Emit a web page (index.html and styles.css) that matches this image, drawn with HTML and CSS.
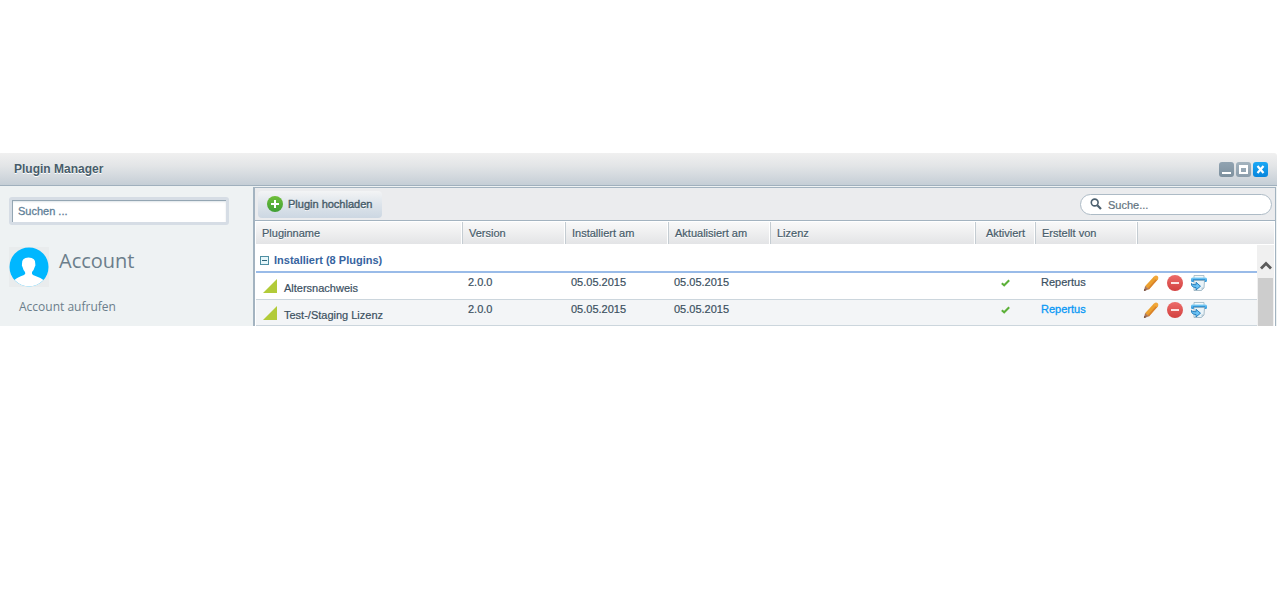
FILE: index.html
```html
<!DOCTYPE html>
<html lang="de">
<head>
<meta charset="utf-8">
<title>Plugin Manager</title>
<link rel="stylesheet" href="styles.css">
</head>
<body>
<svg class="defs" aria-hidden="true">
  <defs>
    <linearGradient id="gGreen" x1="0" y1="0" x2="0" y2="1"><stop offset="0" stop-color="#6fbe3a"/><stop offset="1" stop-color="#3f9f34"/></linearGradient>
    <linearGradient id="gRed" x1="0" y1="0" x2="0" y2="1"><stop offset="0" stop-color="#ec6c6a"/><stop offset="1" stop-color="#d2403f"/></linearGradient>
    <linearGradient id="gBlue" x1="0" y1="0" x2="0" y2="1"><stop offset="0" stop-color="#7fd0f8"/><stop offset="1" stop-color="#2490da"/></linearGradient>
    <symbol id="pencil" viewBox="0 0 16 16">
      <path d="M11 1.500 14.500 4.200 6 14.300 2 11.200Z" fill="#eba02f"/>
      <path d="M13.400 3.400 14.800 4.400 6 14.500 4.600 13.400Z" fill="#d9822b"/>
      <path d="M10.500 2.200Q12-.3 14 .7T15 4.200L14 5.200 10 2.400Z" fill="#f2a73a"/>
      <path d="M2.100 11 6 14.200 1 16Z" fill="#a8755a"/>
      <path d="M1.500 13.800 3.300 15.200 .8 16Z" fill="#6b4636"/>
    </symbol>
    <symbol id="minus" viewBox="0 0 16 16">
      <circle cx="8" cy="8" r="8" fill="url(#gRed)"/><rect x="4" y="7" width="8" height="2" fill="#fbe4e3"/>
    </symbol>
    <symbol id="printer" viewBox="0 0 16 16">
      <path d="M3 .5h10v3H3z" fill="#f4f8fa" stroke="#9bb4c2" stroke-width=".8"/>
      <rect x="0" y="2.500" width="16" height="4.500" rx="1.500" fill="url(#gBlue)"/>
      <path d="M2 5h12" stroke="#1774bb" stroke-width="1"/>
      <path d="M3 5.500h10.500L13 13l-2.500 2.500H3z" fill="#e9f3f8" stroke="#93adbc" stroke-width=".8"/>
      <path d="M13 12.500h-2.500v3z" fill="#b5cad6"/>
      <path d="M.5 8.300Q1 10 5 9.800V7.300L9.500 11.200 5 15v-2.500Q0 12.500.5 8.300Z" fill="#6cc3f5" stroke="#1976b8" stroke-width=".9"/>
    </symbol>
    <symbol id="tick" viewBox="0 0 9 8"><path d="M.8 4.200 3.200 6.300 8.200 1.300" fill="none" stroke="#5cb038" stroke-width="2"/></symbol>
    <symbol id="corner" viewBox="0 0 14 14"><path d="M14 0V14H0Z" fill="#b2cb39"/></symbol>
  </defs>
</svg>
<main class="window">
  <header class="titlebar">
    <h1 class="title">Plugin Manager</h1>
    <div class="tools">
      <button class="tool" aria-label="Minimieren"><svg viewBox="0 0 15 15"><path d="M3 11h9" stroke="#fff" stroke-width="2"/></svg></button>
      <button class="tool" aria-label="Maximieren"><svg viewBox="0 0 15 15"><path d="M3 4.500h9" stroke="#fff" stroke-width="3"/><path d="M4 4v7h7V4" fill="none" stroke="#fff" stroke-width="2"/></svg></button>
      <button class="tool tool-close" aria-label="Schließen"><svg viewBox="0 0 15 15"><path d="M4.500 4 10.500 11M10.500 4 4.500 11" stroke="#fff" stroke-width="2.200"/></svg></button>
    </div>
  </header>
  <div class="content">
    <aside class="sidebar">
      <input class="side-search" type="text" placeholder="Suchen ..." aria-label="Suchen">
      <div class="account">
        <svg class="avatar" viewBox="0 0 40 40" aria-hidden="true">
          <rect width="40" height="40" fill="#e9eced"/>
          <circle cx="20" cy="20" r="19.500" fill="#00b7ff"/>
          <path d="M5.500 33Q8 30.500 15 28Q17 27 16 25Q14 22.500 13.500 20Q12.500 18.500 13 17Q12.500 10.500 19.500 10.500Q26.800 10.500 26.300 17Q26.800 18.500 25.700 20Q25 23 23 25Q22.500 27 24 28Q31 30.500 34.500 33Q28 39.500 20 39.500T5.500 33Z" fill="#fff"/>
        </svg>
        <h2 class="account-title">Account</h2>
      </div>
      <a class="account-link" href="#">Account aufrufen</a>
    </aside>
    <section class="panel">
      <div class="toolbar">
        <button class="upload">
          <svg class="plus" viewBox="0 0 16 16" aria-hidden="true"><circle cx="8" cy="8" r="8" fill="url(#gGreen)"/><path d="M8 4v8M4 8h8" stroke="#fff" stroke-width="2"/></svg>
          Plugin hochladen
        </button>
        <label class="filter">
          <svg class="lens" viewBox="0 0 12 12" aria-hidden="true"><circle cx="4.700" cy="4.500" r="3.400" fill="none" stroke="#4c606f" stroke-width="1.600"/><path d="M7.300 7.200 11 11" stroke="#4c606f" stroke-width="2.200"/></svg>
          <input class="filter-input" type="text" placeholder="Suche..." aria-label="Suche">
        </label>
      </div>
      <div class="grid">
        <table class="plugins">
          <colgroup><col class="c-name"><col class="c-date"><col class="c-date"><col class="c-update"><col class="c-license"><col class="c-active"><col class="c-author"><col></colgroup>
          <thead>
            <tr><th>Pluginname</th><th>Version</th><th>Installiert am</th><th>Aktualisiert am</th><th>Lizenz</th><th class="active">Aktiviert</th><th>Erstellt von</th><th></th></tr>
          </thead>
          <tbody>
            <tr class="group"><td colspan="8"><div class="group-label"><svg class="toggle" viewBox="0 0 9 9" aria-hidden="true"><rect x=".5" y=".5" width="8" height="8" fill="#e6f6fa" stroke="#4f8fa3"/><path d="M2 4.500h5" stroke="#2d6478"/></svg>Installiert (8 Plugins)</div></td></tr>
            <tr class="row">
              <td><div class="name"><svg class="corner" aria-hidden="true"><use href="#corner"/></svg>Altersnachweis</div></td>
              <td>2.0.0</td><td>05.05.2015</td><td>05.05.2015</td><td></td>
              <td class="active"><svg class="tick" aria-label="Aktiviert"><use href="#tick"/></svg></td>
              <td>Repertus</td>
              <td><div class="actions"><button class="action" aria-label="Bearbeiten"><svg><use href="#pencil"/></svg></button><button class="action" aria-label="Deinstallieren"><svg><use href="#minus"/></svg></button><button class="action" aria-label="Neu installieren"><svg><use href="#printer"/></svg></button></div></td>
            </tr>
            <tr class="row alt">
              <td><div class="name"><svg class="corner" aria-hidden="true"><use href="#corner"/></svg>Test-/Staging Lizenz</div></td>
              <td>2.0.0</td><td>05.05.2015</td><td>05.05.2015</td><td></td>
              <td class="active"><svg class="tick" aria-label="Aktiviert"><use href="#tick"/></svg></td>
              <td><a class="author" href="#">Repertus</a></td>
              <td><div class="actions"><button class="action" aria-label="Bearbeiten"><svg><use href="#pencil"/></svg></button><button class="action" aria-label="Deinstallieren"><svg><use href="#minus"/></svg></button><button class="action" aria-label="Neu installieren"><svg><use href="#printer"/></svg></button></div></td>
            </tr>
          </tbody>
        </table>
        <div class="scrollbar" aria-hidden="true">
          <svg class="scroll-up" viewBox="0 0 12 9"><path d="M1 7.500 6 2.500 11 7.500" fill="none" stroke="#5b5b5b" stroke-width="2.800"/></svg>
          <div class="thumb"></div>
        </div>
      </div>
    </section>
  </div>
</main>
</body>
</html>
```
FILE: styles.css
```css
* { box-sizing: border-box; }
body {
  margin: 0;
  padding-top: 153px;
  background: #fff;
  color: #475c6a;
  font: 11px/13px "Liberation Sans", Arial, sans-serif;
}
button, input { font: inherit; color: inherit; }
button { border: 0; padding: 0; background: none; }
svg { display: block; }
.defs { position: absolute; width: 0; height: 0; }

.titlebar {
  display: flex;
  align-items: center;
  justify-content: space-between;
  height: 33px;
  padding: 0 9px 0 14px;
  background: linear-gradient(#f0f0f0, #e3e5e7 40%, #c5ced6);
  border-bottom: 1px solid #a0b0bd;
  border-top-right-radius: 3px;
}
.title { margin: 0; font-size: 12px; line-height: 16px; text-shadow: 0 1px 0 #fff; }
.tools { display: flex; gap: 2px; }
.tool { width: 15px; height: 15px; border-radius: 3px; background: linear-gradient(#91a3b1, #7d909e); }
.tool:nth-child(2) { background: linear-gradient(#a4b3be, #8b9dab); }
.tool-close { background: linear-gradient(#1ba8f5, #0785dc); }

.content { display: flex; background: #eef2f3; }
.sidebar { width: 253px; padding: 11px 9px 0; flex: none; }
.side-search {
  display: block;
  width: 220px;
  height: 28px;
  padding: 0 6px;
  border: 3px solid #d6dde5;
  border-radius: 3px;
  background: #fff;
  box-shadow: inset 1px 1px 0 #94a6b3, inset 0 2px 2px #dfe5e9;
}
.side-search::placeholder { color: #5f7f98; opacity: 1; -webkit-text-stroke: 0.300px #5f7f98; }
.account { display: flex; gap: 10px; padding-top: 22px; font-family: "Open Sans", sans-serif; }
.avatar { width: 40px; height: 40px; }
.account-title { margin: 0; color: #6b7e8b; font-size: 20px; line-height: 28px; font-weight: 400; }
.account-link {
  display: block;
  margin: 11px 0 0 10px;
  color: #6b7e8b;
  font: 12px/18px "Open Sans", sans-serif;
  text-decoration: none;
}

.panel {
  flex: 1;
  min-width: 0;
  margin: 1px 1px 0 0;
  border: solid #a3b3c0;
  border-width: 1px 1px 0 2px;
  background: #fff;
}
.toolbar {
  display: flex;
  align-items: center;
  justify-content: space-between;
  height: 33px;
  padding: 0 3px;
  background: #ebecee;
  border-bottom: 1px solid #a3b3c0;
}
.upload {
  display: flex;
  align-items: center;
  gap: 5px;
  height: 27px;
  padding: 0 10px 0 9px;
  border-radius: 4px;
  background: linear-gradient(#f3f4f5, #dde4eb 50%, #ccd7e2);
  text-shadow: 0 1px 0 #fff;
  -webkit-text-stroke: 0.400px #475c6a;
}
.plus { width: 16px; height: 16px; }
.filter {
  display: flex;
  align-items: center;
  gap: 6px;
  width: 192px;
  height: 21px;
  padding: 0 9px;
  border: 1px solid #adbbc6;
  border-radius: 11px;
  background: #fff;
}
.lens { width: 12px; height: 12px; flex: none; }
.filter-input { flex: 1; min-width: 0; padding: 2px 0 0; border: 0; background: none; outline: 0; }
.filter-input::placeholder { color: #62727e; opacity: 1; -webkit-text-stroke: 0.200px #62727e; }

.grid { position: relative; margin: 1px 1px 0; }
.plugins { width: 100%; table-layout: fixed; border-collapse: separate; border-spacing: 0; }
.c-name { width: 207px; }
.c-date { width: 103px; }
.c-update { width: 102px; }
.c-license { width: 205px; }
.c-active { width: 60px; }
.c-author { width: 102px; }
th {
  height: 22px;
  padding: 0 6px;
  background: linear-gradient(#f9f9f9, #e3e4e6);
  border-right: 1px solid #c4ccd2;
  box-shadow: inset -1px 0 0 #fff;
  font-weight: 400;
  text-align: left;
  white-space: nowrap;
  text-shadow: 0 1px 0 #fff;
  -webkit-text-stroke: 0.200px #475c6a;
}
th:last-child { border-right: 0; box-shadow: none; }
td { padding: 0; }
.group td { height: 29px; padding: 5px 4px 0; border-bottom: 2px solid #99bbe8; }
.group-label { display: flex; align-items: center; gap: 5px; color: #3764a0; font-weight: 700; }
.toggle { width: 9px; height: 9px; }
.row { -webkit-text-stroke: 0.200px #3b505f; color: #3b505f; }
.row td { height: 27px; padding: 3px 5px 0; border-bottom: 1px solid #ccd6dd; vertical-align: top; }
.row.alt td { height: 26px; background: #f3f5f7; }
.row .active, .active { padding-left: 0; padding-right: 0; text-align: center; }
.row .active { padding-right: 2px; }
.name { display: flex; align-items: flex-end; gap: 7px; height: 19px; padding-left: 2px; }
.corner { width: 14px; height: 14px; margin-bottom: 2px; }
.tick { width: 9px; height: 8px; margin: 3px auto 0; }
.author { color: #0a98f5; text-decoration: none; -webkit-text-stroke: 0.300px #0a98f5; }
.row .actions { display: flex; gap: 8px; margin-top: -1px; }
.action, .action svg { width: 16px; height: 16px; }

.scrollbar {
  position: absolute;
  top: 23px;
  right: 0;
  bottom: 0;
  width: 17px;
  background: #f0f0f0;
}
.scroll-up { width: 12px; height: 9px; margin: 16px auto 0; }
.thumb { height: 100%; max-height: 48px; margin: 8px 1px 0; background: #cdcdcd; }
```
